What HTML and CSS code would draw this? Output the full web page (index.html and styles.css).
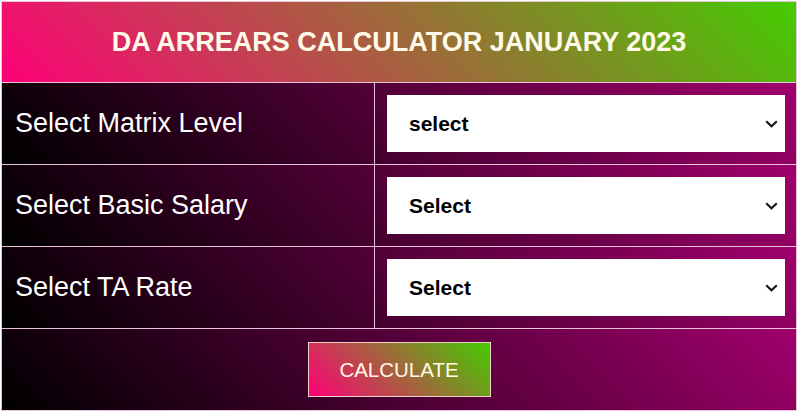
FILE: index.html
```html
<!DOCTYPE html>
<html lang="en">
<head>
  <meta charset="UTF-8" />
  <meta name="viewport" content="width=device-width, initial-scale=1.0"/>
  <title>DA Arrears Calculator January 2023</title>
  <link rel="stylesheet" href="styles.css">
</head>
<body>
  <div class="calc">
    <div class="calc-title">DA ARREARS CALCULATOR JANUARY 2023</div>

    <div class="calc-row">
      <div class="calc-label">Select Matrix Level</div>
      <div class="calc-field">
        <div class="select-wrap">
          <select id="level">
            <option value="">select</option>
            <option value="1">Level 1</option>
            <option value="2">Level 2</option>
            <option value="3">Level 3</option>
          </select>
          <svg class="chevron" width="13" height="8" viewBox="0 0 13 8"><polyline points="1.2,1.2 6.5,6.3 11.8,1.2" fill="none" stroke="#111" stroke-width="2"/></svg>
        </div>
      </div>
    </div>

    <div class="calc-row">
      <div class="calc-label">Select Basic Salary</div>
      <div class="calc-field">
        <div class="select-wrap">
          <select id="basic">
            <option value="">Select</option>
          </select>
          <svg class="chevron" width="13" height="8" viewBox="0 0 13 8"><polyline points="1.2,1.2 6.5,6.3 11.8,1.2" fill="none" stroke="#111" stroke-width="2"/></svg>
        </div>
      </div>
    </div>

    <div class="calc-row">
      <div class="calc-label">Select TA Rate</div>
      <div class="calc-field">
        <div class="select-wrap">
          <select id="ta">
            <option value="">Select</option>
            <option value="1">Higher TPTA Cities</option>
            <option value="2">Other Places</option>
          </select>
          <svg class="chevron" width="13" height="8" viewBox="0 0 13 8"><polyline points="1.2,1.2 6.5,6.3 11.8,1.2" fill="none" stroke="#111" stroke-width="2"/></svg>
        </div>
      </div>
    </div>

    <div class="calc-row calc-actions">
      <button type="button">CALCULATE</button>
    </div>
  </div>
</body>
</html>
```

FILE: styles.css
```css
body {
  margin: 0;
  padding: 1px;
  font-family: 'Liberation Sans', Arial, sans-serif;
  background: #fff;
}

.calc {
  width: 796px;
  box-sizing: border-box;
  border: 1px solid #e8c4dc;
}

.calc-title {
  height: 80px;
  display: flex;
  align-items: center;
  justify-content: center;
  border-bottom: 1px solid #e8c4dc;
  background: linear-gradient(45deg, #ff0078, #44cc00);
  color: #fffbe8;
  font-size: 27px;
  font-weight: bold;
}

.calc-row {
  height: 81px;
  display: flex;
  border-bottom: 1px solid #e8c4dc;
  background: linear-gradient(45deg, #000000, #a0006c);
}

.calc-row:last-child {
  border-bottom: none;
}

.calc-label {
  width: 373px;
  box-sizing: border-box;
  border-right: 1px solid #e8c4dc;
  padding-left: 13px;
  display: flex;
  align-items: center;
  color: #fff;
  font-size: 27px;
}

.calc-field {
  flex: 1;
  padding: 12px 11px 12px 12px;
}

.select-wrap {
  position: relative;
  height: 57px;
}

.select-wrap select {
  width: 100%;
  height: 100%;
  appearance: none;
  -webkit-appearance: none;
  border: none;
  border-radius: 0;
  background: #fff;
  padding: 0 40px 0 22px;
  font-family: 'Liberation Sans', Arial, sans-serif;
  font-size: 21px;
  font-weight: bold;
  color: #000;
  cursor: pointer;
}

.chevron {
  position: absolute;
  right: 7px;
  top: 25px;
  pointer-events: none;
}

.calc-actions {
  align-items: center;
  justify-content: center;
}

.calc-actions button {
  width: 183px;
  height: 55px;
  border: 1px solid #f2d2c8;
  background: linear-gradient(45deg, #ff0078, #44cc00);
  color: #fffbe8;
  font-family: 'Liberation Sans', Arial, sans-serif;
  font-size: 20.5px;
  cursor: pointer;
}
```
